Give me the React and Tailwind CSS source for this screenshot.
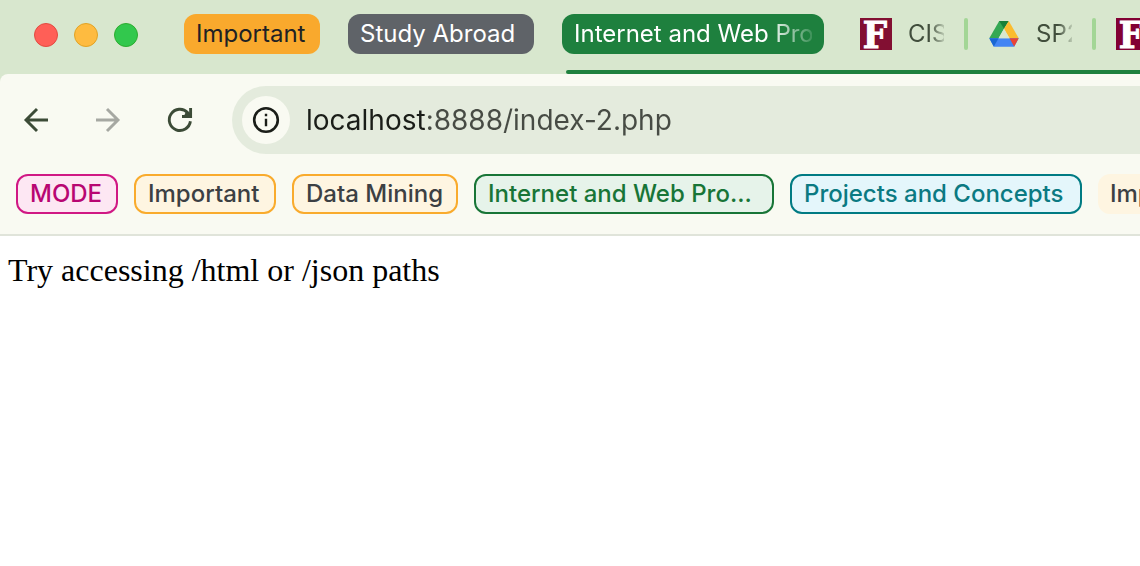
import React from "react";

const sans = "font-['Inter','Liberation_Sans',sans-serif]";

function TrafficLights() {
  return (
    <div className="flex shrink-0 gap-4">
      <button aria-label="Close window" className="size-6 rounded-full border border-[#e24b41] bg-[#ff5f57]" />
      <button aria-label="Minimize window" className="size-6 rounded-full border border-[#e1a325] bg-[#febb40]" />
      <button aria-label="Zoom window" className="size-6 rounded-full border border-[#2dac2f] bg-[#32c84d]" />
    </div>
  );
}

function TabGroup({ children, className }) {
  return (
    <button className={`flex h-10 shrink-0 items-center overflow-hidden whitespace-nowrap rounded-xl px-3 text-2xl ${className}`}>
      {children}
    </button>
  );
}

function UniversityIcon({ className }) {
  return (
    <svg viewBox="0 0 32 32" className={`size-8 shrink-0 ${className}`} aria-hidden="true">
      <text
        x="15"
        y="30"
        textAnchor="middle"
        fill="#fff"
        stroke="#fff"
        strokeWidth="1"
        className="font-['DejaVu_Serif_Condensed','DejaVu_Serif',serif] text-[38px] font-bold"
      >
        F
      </text>
    </svg>
  );
}

function DriveIcon() {
  return (
    <svg viewBox="0 0 32 32" className="size-8 shrink-0" aria-hidden="true">
      <path d="M11.2 3 1.3 20.2h9.3L20.3 3z" fill="#34a853" />
      <path d="M11.2 3h9.6L16 10.8z" fill="#188038" />
      <path d="M20.8 3 30.7 20.2h-9.2L16 10.8z" fill="#fbbc2e" />
      <path d="M1.3 20.2h29.4L26.5 28.2a1 1 0 0 1-.9.6H6.4a1 1 0 0 1-.9-.6z" fill="#4285f4" />
      <path d="M1.3 20.2h9.3L5.8 28.6z" fill="#1967d2" />
      <path d="M21.5 20.2h9.2L26.2 28.6z" fill="#ea4335" />
      <path d="M16 10.8 21.5 20.2H10.6z" fill="#d8e7ce" />
    </svg>
  );
}

function Tab({ icon, label }) {
  return (
    <button className="flex shrink-0 items-center gap-4">
      {icon}
      <span className="w-9 overflow-hidden whitespace-nowrap text-left text-2xl text-[#414e3c] [mask-image:linear-gradient(to_right,black_60%,transparent_110%)]">
        {label}
      </span>
    </button>
  );
}

function Separator() {
  return <div className="h-8 w-1 shrink-0 rounded-sm bg-[#a3d696]" />;
}

function TabStrip() {
  return (
    <div className="relative flex h-[74px] items-start overflow-hidden bg-[#d8e7ce] pl-[34px]">
      <div className="flex h-[70px] shrink-0 items-center">
        <TrafficLights />
      </div>
      <div className="ml-[46px] flex h-[68px] shrink-0 items-center gap-7">
        <TabGroup className="w-[136px] bg-[#f9a92d] text-[#202124]">Important</TabGroup>
        <TabGroup className="w-[186px] bg-[#5f6368] text-white">Study Abroad</TabGroup>
        <TabGroup className="w-[262px] bg-[#1e803e] text-white">
          <span className="w-full overflow-hidden text-left [mask-image:linear-gradient(to_right,black_82%,transparent_103%)]">
            Internet and Web Programming
          </span>
        </TabGroup>
      </div>
      <div className="ml-9 flex h-[68px] shrink-0 items-center gap-5">
        <Tab icon={<UniversityIcon className="bg-[#820f32]" />} label="CISC" />
        <Separator />
        <Tab icon={<DriveIcon />} label="SP24" />
        <Separator />
        <UniversityIcon className="bg-[#820034]" />
      </div>
      <div className="absolute bottom-0 left-[566px] right-0 h-1 rounded-l-sm bg-[#1e803e]" />
    </div>
  );
}

function BackIcon() {
  return (
    <svg viewBox="0 0 32 32" className="size-8" fill="none" stroke="currentColor" strokeWidth="2.9" aria-hidden="true">
      <path d="M28 16H6M17 5 6 16l11 11" />
    </svg>
  );
}

function ForwardIcon() {
  return (
    <svg viewBox="0 0 32 32" className="size-8" fill="none" stroke="currentColor" strokeWidth="2.9" aria-hidden="true">
      <path d="M4 16h22M15 5l11 11-11 11" />
    </svg>
  );
}

function ReloadIcon() {
  return (
    <svg viewBox="0 0 32 32" className="size-8" fill="none" stroke="currentColor" strokeWidth="2.9" aria-hidden="true">
      <path d="M26.4 17.3A10.6 10.6 0 1 1 23.6 8.6L26 11" />
      <path d="M26.6 4v8.5H18" />
      <path d="M22 7.5 26.5 12H20z" fill="currentColor" stroke="none" />
    </svg>
  );
}

function Toolbar() {
  return (
    <div className="flex items-center py-3 pl-5">
      <nav aria-label="History" className="flex shrink-0 items-center gap-10 text-[#3c4b37]">
        <button aria-label="Back"><BackIcon /></button>
        <button aria-label="Forward" className="text-[#a6a8a2]"><ForwardIcon /></button>
        <button aria-label="Reload"><ReloadIcon /></button>
      </nav>
      <div className="ml-9 flex h-[68px] min-w-0 flex-1 items-center gap-4 rounded-l-full bg-[#e4ebdd] pl-[10px]">
        <button aria-label="View site information" className="flex size-12 shrink-0 items-center justify-center rounded-full bg-[#f9faf2] text-[#1a1d18]">
          <svg viewBox="0 0 28 28" className="size-7" fill="none" stroke="currentColor" strokeWidth="2.6" aria-hidden="true">
            <circle cx="14" cy="14" r="11.8" />
            <path d="M14 12.8v7.4M14 7.8v2.4" strokeWidth="2.4" />
          </svg>
        </button>
        <input
          type="text"
          aria-label="Address"
          defaultValue="localhost:8888/index-2.php"
          spellCheck={false}
          className="min-w-0 flex-1 bg-[linear-gradient(to_right,#1a1d18_120px,#474b44_120px)] bg-clip-text text-[28px] text-transparent caret-[#1a1d18] outline-none"
        />
      </div>
    </div>
  );
}

const bookmarks = [
  { label: "MODE", className: "w-[102px] border-[#d01884] bg-[#fde7f3] text-[#b80672]" },
  { label: "Important", className: "w-[142px] border-[#f9ab2d] bg-[#fef5e1] text-[#3c4043]" },
  { label: "Data Mining", className: "w-[166px] border-[#f9ab2d] bg-[#fef5e1] text-[#3c4043]" },
  { label: "Internet and Web Pro...", className: "w-[300px] border-[#187537] bg-[#e6f3ea] text-[#187537]" },
  { label: "Projects and Concepts", className: "w-[292px] border-[#007b83] bg-[#e4f6fb] text-[#0b7a82]" },
];

function BookmarksBar() {
  return (
    <div className="flex gap-4 overflow-hidden border-b-2 border-[#e0e4da] px-4 pb-5 pt-2">
      {bookmarks.map((b) => (
        <button
          key={b.label}
          className={`flex h-10 shrink-0 items-center whitespace-nowrap rounded-xl border-2 px-3 text-2xl font-medium ${b.className}`}
        >
          {b.label}
        </button>
      ))}
      <button className="flex h-10 shrink-0 items-center whitespace-nowrap rounded-xl bg-[#fef5e1] px-3 text-2xl font-medium text-[#3c4043]">
        Important
      </button>
    </div>
  );
}

export default function App() {
  return (
    <div className="min-h-screen overflow-hidden bg-white">
      <header className={`bg-[#d8e7ce] ${sans}`}>
        <TabStrip />
        <div className="rounded-tl-lg bg-[#f9faf2]">
          <Toolbar />
          <BookmarksBar />
        </div>
      </header>
      <main className="px-2 py-4 font-['Liberation_Serif',serif] text-[32px] leading-9 text-black">
        Try accessing /html or /json paths
      </main>
    </div>
  );
}
